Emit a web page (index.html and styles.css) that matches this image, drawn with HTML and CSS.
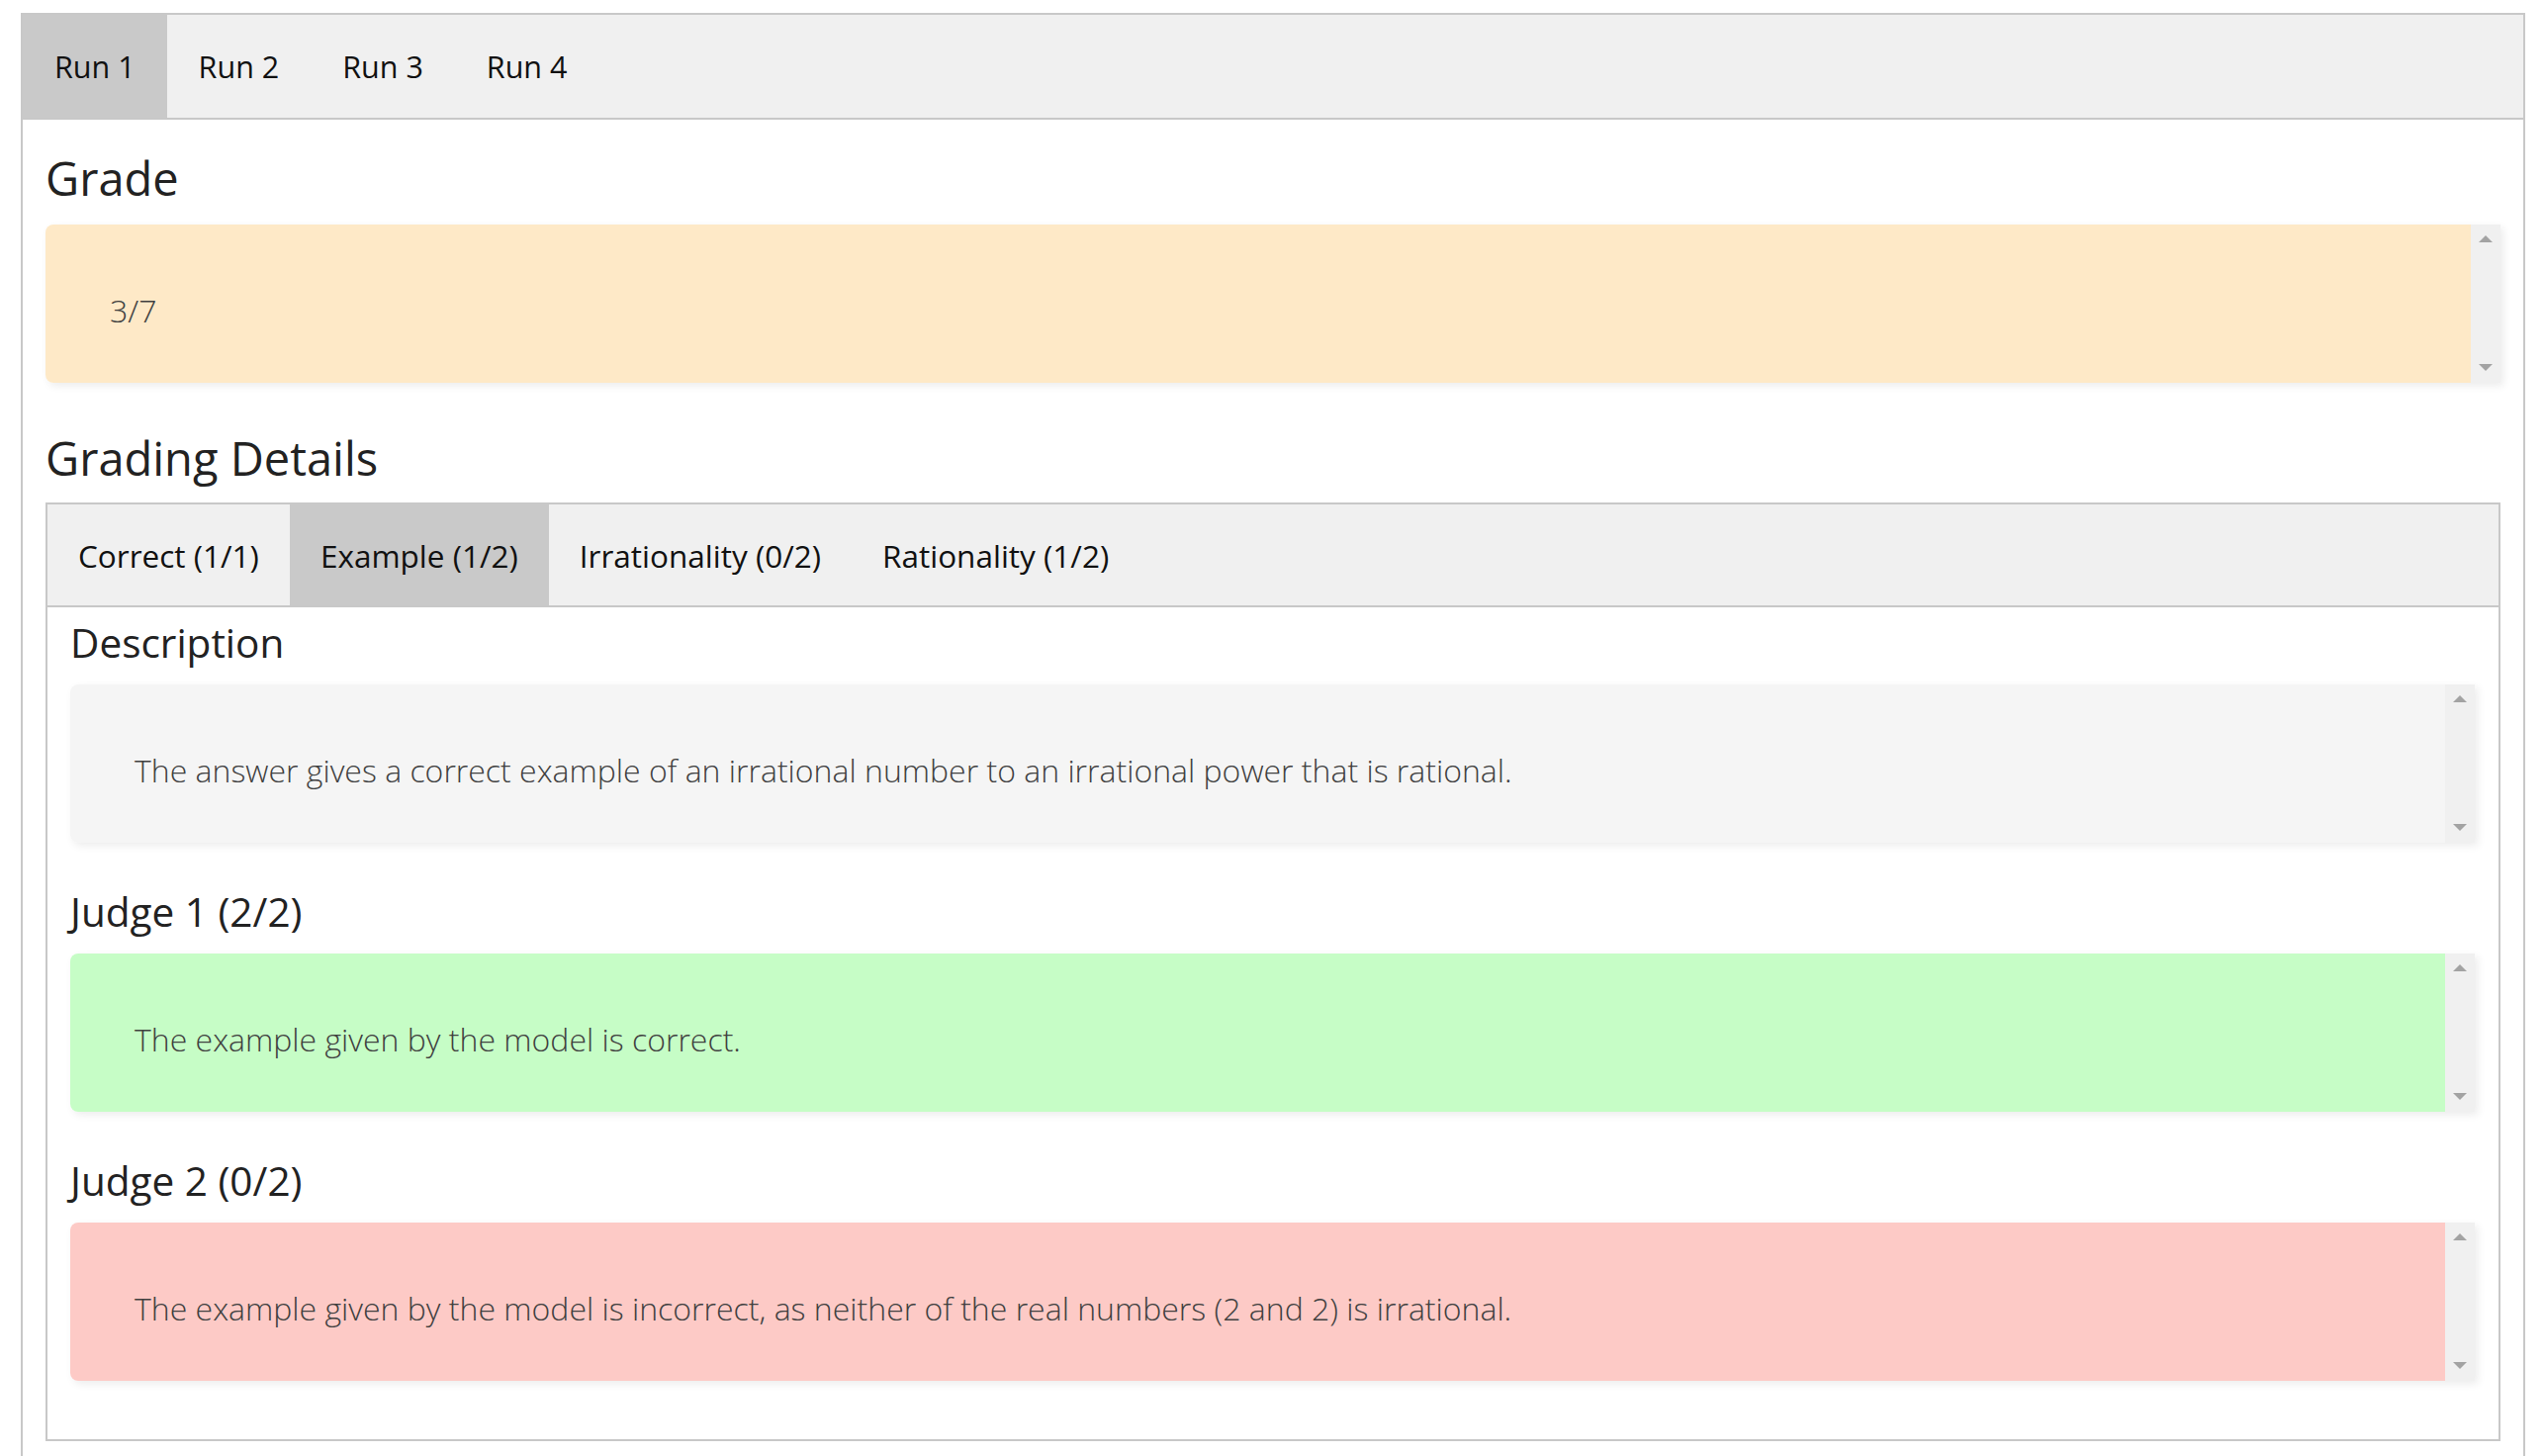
FILE: index.html
```html
<!DOCTYPE html>
<html lang="en">
<head>
<meta charset="utf-8">
<title>Grading</title>
<link rel="stylesheet" href="styles.css">
</head>
<body>
<div class="page">
  <div class="tabs main-tabs">
    <div class="tab active">Run 1</div>
    <div class="tab">Run 2</div>
    <div class="tab">Run 3</div>
    <div class="tab">Run 4</div>
  </div>
  <div class="panel">
    <h2 class="title">Grade</h2>
    <div class="box">
      <div class="box-body grade">3/7</div>
      <div class="sbar"><span class="arrow up"></span><span class="arrow down"></span></div>
    </div>
    <h2 class="title details-title">Grading Details</h2>
    <div class="subwrap">
      <div class="tabs sub-tabs">
        <div class="tab">Correct (1/1)</div>
        <div class="tab active">Example (1/2)</div>
        <div class="tab">Irrationality (0/2)</div>
        <div class="tab">Rationality (1/2)</div>
      </div>
      <div class="subpanel">
        <h3 class="subhead">Description</h3>
        <div class="box">
          <div class="box-body desc">The answer gives a correct example of an irrational number to an irrational power that is rational.</div>
          <div class="sbar"><span class="arrow up"></span><span class="arrow down"></span></div>
        </div>
        <h3 class="subhead spaced">Judge 1 (2/2)</h3>
        <div class="box">
          <div class="box-body good">The example given by the model is correct.</div>
          <div class="sbar"><span class="arrow up"></span><span class="arrow down"></span></div>
        </div>
        <h3 class="subhead spaced">Judge 2 (0/2)</h3>
        <div class="box">
          <div class="box-body bad">The example given by the model is incorrect, as neither of the real numbers (2 and 2) is irrational.</div>
          <div class="sbar"><span class="arrow up"></span><span class="arrow down"></span></div>
        </div>
      </div>
    </div>
  </div>
</div>
</body>
</html>
```

FILE: styles.css
```css
html {
  overflow: hidden;
}

body {
  margin: 13px 19px 0 21px;
  background: #ffffff;
  font-family: "Open Sans", "Noto Sans", sans-serif;
}

.page {
  border: 2px solid #c8c8c8;
}

.tabs {
  display: flex;
  background: #f0f0f0;
  border-bottom: 2px solid #c8c8c8;
}

.tab {
  display: flex;
  align-items: center;
  padding: 0 32px;
  font-size: 30.5px;
  color: #111111;
  white-space: nowrap;
}

.tab.active {
  background: #c9c9c9;
}

.main-tabs .tab {
  height: 104px;
}

.sub-tabs .tab {
  height: 102px;
  font-size: 31.5px;
  padding: 0 31px;
}

.panel {
  padding: 31px 23px 60px 23px;
}

.title {
  margin: 0 0 19px;
  font-size: 47px;
  line-height: 56px;
  font-weight: 500;
  color: #222222;
}

.details-title {
  margin: 48px 0 17px;
}

.subwrap {
  border: 2px solid #c8c8c8;
}

.subpanel {
  padding: 12px 24px 59px 23px;
}

.subhead {
  margin: 0 0 18px;
  font-size: 40.5px;
  line-height: 48px;
  font-weight: 500;
  color: #222222;
}

.subhead.spaced {
  margin-top: 46px;
}

.box {
  display: flex;
  border-radius: 8px 0 0 8px;
  box-shadow: 3px 3px 8px rgba(0, 0, 0, 0.08);
}

.box-body {
  flex: 1;
  padding: 63px 0 49px 65px;
  font-size: 32px;
  line-height: 48px;
  font-weight: 300;
  color: #404040;
  border-radius: 8px 0 0 8px;
  white-space: nowrap;
}

.box-body.grade {
  background: #fee9c7;
}

.box-body.desc {
  background: #f5f5f5;
}

.box-body.good {
  background: #c6fdc6;
}

.box-body.bad {
  background: #fdcac6;
}

.sbar {
  width: 30px;
  background: #f0f0f0;
  display: flex;
  flex-direction: column;
  justify-content: space-between;
  align-items: center;
  padding: 11px 0 12px;
}

.arrow {
  width: 0;
  height: 0;
  border-left: 7px solid transparent;
  border-right: 7px solid transparent;
}

.arrow.up {
  border-bottom: 7px solid #a3a3a3;
}

.arrow.down {
  border-top: 7px solid #a3a3a3;
}
```
